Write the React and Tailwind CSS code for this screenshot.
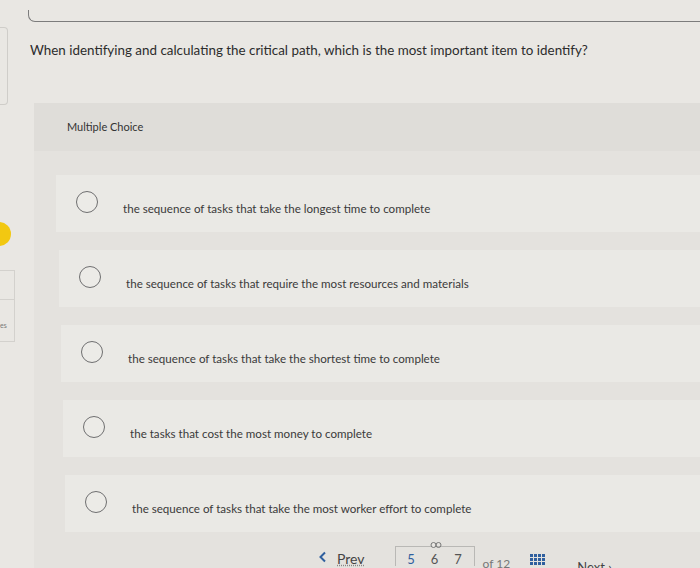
import React from "react";

const options = [
  { text: "the sequence of tasks that take the longest time to complete", shift: "ml-[0px]" },
  { text: "the sequence of tasks that require the most resources and materials", shift: "ml-[3px]" },
  { text: "the sequence of tasks that take the shortest time to complete", shift: "ml-[5px]" },
  { text: "the tasks that cost the most money to complete", shift: "ml-[7px]" },
  { text: "the sequence of tasks that take the most worker effort to complete", shift: "ml-[9px]" },
];

function Radio() {
  return (
    <div className="w-[22px] h-[22px] rounded-full border-[1.5px] border-[#6f6f70] bg-[#ecebe7] shrink-0" />
  );
}

export default function App() {
  return (
    <div
      className="w-[700px] h-[568px] overflow-hidden bg-[#e9e7e3] flex text-[#333]"
      style={{ fontFamily: "Lato, 'Open Sans', Arial, sans-serif" }}
    >
      {/* left rail */}
      <div className="w-[16px] shrink-0 flex flex-col">
        <div className="mt-[27px] h-[78px] w-[8px] border border-l-0 border-[#cfcdc9] rounded-r-[4px]" />
        <div className="mt-[117px] -ml-[13px] w-[24px] h-[24px] rounded-full bg-[#f2c811]" />
        <div className="mt-[24px] h-[30px] w-[15px] border border-l-0 border-[#d3d1cd]" />
        <div className="h-[42px] w-[15px] border border-l-0 border-t-0 border-[#d3d1cd] flex items-center pt-[10px]">
          <span className="text-[7px] text-[#777] leading-none">es</span>
        </div>
      </div>

      {/* main */}
      <div className="flex-1 flex flex-col">
        <div className="mt-[10px] ml-[12px] h-[12px] border-l border-b border-[#7c7c7c] rounded-bl-[7px]" />
        <div className="ml-[14px] mt-[19px] text-[13.4px] leading-[18px] text-[#2c2c2c]">
          When identifying and calculating the critical path, which is the most important item to identify?
        </div>

        <div className="ml-[18px] mt-[44px] flex-1 bg-[#e4e2de] flex flex-col">
          <div className="h-[48px] bg-[#dfddd9] pl-[33px] pt-[16px] text-[11px] text-[#333]">
            Multiple Choice
          </div>
          <div className="flex flex-col pt-[24px] pl-[22px]">
            {options.map((o, i) => (
              <div
                key={i}
                className={`h-[57px] mb-[18px] bg-[#eae9e5] flex items-center ${o.shift}`}
              >
                <div className="ml-[20px] -mt-[4px]">
                  <Radio />
                </div>
                <span className="ml-[25px] mt-[10px] text-[11.6px] text-[#3a3a3a]">{o.text}</span>
              </div>
            ))}
          </div>

          {/* pager */}
          <div className="mt-[-14px] flex items-end h-[30px] pl-[284px] text-[#444]">
            <svg className="mb-[3px]" width="9" height="12" viewBox="0 0 9 12">
              <path d="M7 1.5 L2.5 6 L7 10.5" fill="none" stroke="#2f5f9e" strokeWidth="2" />
            </svg>
            <span className="ml-[10px] text-[14px] leading-none underline decoration-dotted decoration-[#888]">Prev</span>
            <div className="relative ml-[30px] w-[80px] h-[20px] border border-b-0 border-[#b9b8b5] flex items-end justify-center gap-[16px] text-[13px] leading-none">
              <span className="text-[#2f5f9e]">5</span>
              <span className="text-[#555]">6</span>
              <span className="text-[#555]">7</span>
              <svg className="absolute left-[34px] -top-[6px]" width="12" height="8" viewBox="0 0 12 8">
                <rect x="1" y="1.5" width="5" height="5" rx="2.5" fill="#e9e7e3" stroke="#777" strokeWidth="1" />
                <rect x="6" y="1.5" width="5" height="5" rx="2.5" fill="none" stroke="#777" strokeWidth="1" />
              </svg>
            </div>
            <span className="ml-[8px] text-[12px] leading-none text-[#777] mb-[-4px]">of 12</span>
            <div className="ml-[20px] mb-[1px] grid grid-cols-4 gap-[1px]">
              {Array.from({ length: 12 }).map((_, i) => (
                <div key={i} className="w-[3px] h-[3px] bg-[#2f5f9e]" />
              ))}
            </div>
            <span className="ml-[32px] text-[13px] leading-none text-[#444] mb-[-8px]">Next ›</span>
          </div>
        </div>
      </div>
    </div>
  );
}
